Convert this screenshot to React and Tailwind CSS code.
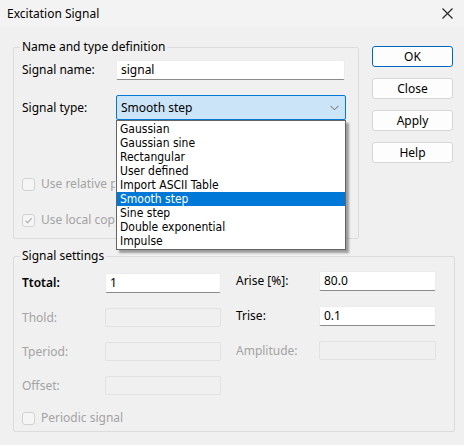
const font = { fontFamily: '"Segoe UI", "Noto Sans", "Open Sans", sans-serif' };

function TextBox({ value, disabled, className = "" }) {
  if (disabled) {
    return <div className={`h-[19px] rounded-[2px] border border-[#e2e2e2] bg-[#f0f0f0] ${className}`} />;
  }
  return (
    <div
      className={`h-[20px] rounded-[2px] border border-[#ececec] border-b-[#8a8a8a] bg-white pl-[4px] text-[12px] leading-[18px] text-black ${className}`}
    >
      {value}
    </div>
  );
}

function Check({ checked, label, clip }) {
  return (
    <div className={`flex items-center gap-[6px] text-[12px] text-[#a3a3a3] ${clip ? "w-[93px] overflow-hidden" : ""}`}>
      <div className="flex h-[13px] w-[13px] shrink-0 items-center justify-center rounded-[3px] border border-[#d2d2d2] bg-[#f5f5f5]">
        {checked && (
          <svg width="9" height="9" viewBox="0 0 9 9" fill="none">
            <path d="M1.5 4.6 L3.6 6.7 L7.6 2.3" stroke="#b5b5b5" strokeWidth="1.3" />
          </svg>
        )}
      </div>
      <span className="whitespace-nowrap">{label}</span>
    </div>
  );
}

function Btn({ children, primary }) {
  return (
    <div
      className={`flex h-[21px] w-[81px] items-center justify-center rounded-[3px] bg-[#fdfdfd] text-[12px] text-black ${
        primary ? "border border-[#0067c0]" : "border border-[#d6d6d6]"
      }`}
    >
      {children}
    </div>
  );
}

function Group({ title, className = "", children }) {
  return (
    <div className={`relative rounded-[2px] border border-[#dcdcdc] ${className}`}>
      <span className="absolute left-[6px] top-[-9px] bg-[#f0f0f0] px-[2px] text-[12px] leading-[16px] text-black">
        {title}
      </span>
      {children}
    </div>
  );
}

const items = [
  "Gaussian",
  "Gaussian sine",
  "Rectangular",
  "User defined",
  "Import ASCII Table",
  "Smooth step",
  "Sine step",
  "Double exponential",
  "Impulse",
];

function Row({ label, value, disabled, bold, labelW = "w-[83px]", inputW = "w-[116px]" }) {
  return (
    <div className="flex items-center">
      <span className={`${labelW} text-[12px] ${disabled ? "text-[#a3a3a3]" : "text-black"} ${bold ? "font-semibold" : ""}`}>
        {label}
      </span>
      <TextBox value={value} disabled={disabled} className={inputW} />
    </div>
  );
}

export default function App() {
  return (
    <div className="h-[445px] w-[464px] overflow-hidden bg-[#f0f0f0]" style={font}>
      <div className="flex h-[27px] items-center justify-between bg-[#f3f3f3] pl-[7px] pr-[11px]">
        <span className="text-[12px] text-black">Excitation Signal</span>
        <svg width="11" height="11" viewBox="0 0 11 11">
          <path d="M0.5 0.5 L10.5 10.5 M10.5 0.5 L0.5 10.5" stroke="#222" strokeWidth="1.1" />
        </svg>
      </div>

      <div className="pl-[13px] pt-[20px]">
        <div className="flex">
          <Group title="Name and type definition" className="h-[192px] w-[346px]">
            <div className="pl-[8px] pt-[12px]">
              <div className="flex items-center">
                <span className="w-[94px] text-[12px] text-black">Signal name:</span>
                <TextBox value="signal" className="w-[229px]" />
              </div>
              <div className="relative z-10 mt-[15px] flex items-center">
                <span className="w-[94px] text-[12px] text-black">Signal type:</span>
                <div className="relative">
                  <div className="flex h-[25px] w-[230px] items-center justify-between rounded-[2px] border border-[#0078d4] bg-[#cce4f7] pl-[4px] pr-[6px] text-[12px] text-black">
                    <span>Smooth step</span>
                    <svg width="9" height="6" viewBox="0 0 9 6" fill="none">
                      <path d="M0.5 0.8 L4.5 4.8 L8.5 0.8" stroke="#666" strokeWidth="1" />
                    </svg>
                  </div>
                  <div
                    className="absolute left-0 top-[25px] z-10 w-[230px] border border-[#646464] bg-white py-[1px] shadow-[3px_3px_2px_rgba(0,0,0,0.35)]"
                    style={{ fontFamily: '"DejaVu Sans Condensed", "DejaVu Sans", sans-serif' }}
                  >
                    {items.map((it) => (
                      <div
                        key={it}
                        className={`h-[14px] pl-[3px] text-[12px] leading-[14px] ${
                          it === "Smooth step" ? "bg-[#0078d7] text-white" : "text-black"
                        }`}
                      >
                        {it}
                      </div>
                    ))}
                  </div>
                </div>
              </div>
              <div className="mt-[55px] flex flex-col gap-[18px]">
                <Check label="Use relative path" clip />
                <Check checked label="Use local copy" clip />
              </div>
            </div>
          </Group>

          <div className="ml-[13px] mt-[-1px] flex flex-col gap-[11px]">
            <Btn primary>OK</Btn>
            <Btn>Close</Btn>
            <Btn>Apply</Btn>
            <Btn>Help</Btn>
          </div>
        </div>

        <Group title="Signal settings" className="mt-[17px] h-[176px] w-[442px]">
          <div className="flex pl-[8px] pt-[16px]">
            <div className="flex flex-col gap-[15px]">
              <Row label="Ttotal:" value="1" bold />
              <Row label="Thold:" disabled />
              <Row label="Tperiod:" disabled />
              <Row label="Offset:" disabled />
              <div className="mt-[-1px]">
                <Check label="Periodic signal" />
              </div>
            </div>
            <div className="ml-[15px] mt-[-2px] flex flex-col gap-[15px]">
              <Row label="Arise [%]:" value="80.0" labelW="w-[83px]" inputW="w-[117px]" />
              <Row label="Trise:" value="0.1" labelW="w-[83px]" inputW="w-[117px]" />
              <Row label="Amplitude:" disabled labelW="w-[83px]" inputW="w-[117px]" />
            </div>
          </div>
        </Group>
      </div>
    </div>
  );
}
